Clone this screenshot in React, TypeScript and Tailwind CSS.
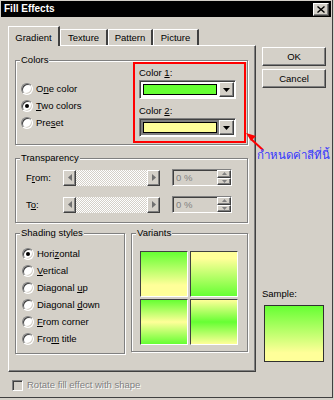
const raised =
  "border border-t-white border-l-white border-r-[#404040] border-b-[#404040] shadow-[inset_-1px_-1px_0_#808080]";
const sunken =
  "border border-t-[#808080] border-l-[#808080] border-r-white border-b-white shadow-[inset_1px_1px_0_#404040]";
const etched = "relative border border-[#808080] shadow-[inset_1px_1px_0_#ffffff,1px_1px_0_#ffffff]";

function Legend({ children }: { children: React.ReactNode }) {
  return (
    <span className="absolute -top-[7px] left-[4px] px-[1px] bg-[#d4d0c8] leading-[12px]">{children}</span>
  );
}

function Radio({ checked }: { checked?: boolean }) {
  return (
    <span className="w-[12px] h-[12px] rounded-full bg-white border border-t-[#808080] border-l-[#808080] border-r-white border-b-white shadow-[inset_1px_1px_0_#404040,inset_-1px_-1px_0_#d4d0c8] flex items-center justify-center shrink-0">
      {checked && <span className="w-[4px] h-[4px] rounded-full bg-black" />}
    </span>
  );
}

function RadioRow({ checked, children }: { checked?: boolean; children: React.ReactNode }) {
  return (
    <div className="flex items-center gap-[3px] h-[17px]">
      <Radio checked={checked} />
      <span>{children}</span>
    </div>
  );
}

function Combo({ color, focus }: { color: string; focus?: boolean }) {
  return (
    <div className={`w-[97px] h-[19px] flex bg-white p-[1px] ${sunken}`}>
      <div className={`flex-1 p-[2px] ${focus ? "bg-[#808080]" : "bg-white"}`}>
        <div className={`h-full border border-black ${color}`} />
      </div>
      <div className={`w-[15px] bg-[#d4d0c8] flex items-center justify-center ${raised}`}>
        <svg width="7" height="4" viewBox="0 0 7 4">
          <path d="M0 0h7L3.5 4z" fill="#000" />
        </svg>
      </div>
    </div>
  );
}

function ArrowBtn({ dir }: { dir: "left" | "right" }) {
  return (
    <div className={`w-[13px] h-full bg-[#d4d0c8] flex items-center justify-center ${raised}`}>
      <svg width="4" height="7" viewBox="0 0 4 7">
        <path d={dir === "left" ? "M4 0v7L0 3.5z" : "M0 0v7l4-3.5z"} fill="#707070" />
      </svg>
    </div>
  );
}

function SliderRow({ label }: { label: React.ReactNode }) {
  return (
    <div className="flex items-center h-[17px]">
      <span className="w-[37px]">{label}</span>
      <div className="flex w-[97px] h-[16px]">
        <ArrowBtn dir="left" />
        <div className="flex-1 bg-[repeating-conic-gradient(#ffffff_0%_25%,#d4d0c8_0%_50%)] bg-size-[2px_2px]" />
        <ArrowBtn dir="right" />
      </div>
      <div className={`ml-[12px] w-[60px] h-[17px] flex ${sunken}`}>
        <span className="flex-1 pl-[3px] text-[#808080] leading-[15px]">0 %</span>
        <div className="w-[14px] flex flex-col">
          <div className={`flex-1 flex items-center justify-center ${raised}`}>
            <svg width="5" height="3" viewBox="0 0 5 3">
              <path d="M0 3h5L2.5 0z" fill="#808080" />
            </svg>
          </div>
          <div className={`flex-1 flex items-center justify-center ${raised}`}>
            <svg width="5" height="3" viewBox="0 0 5 3">
              <path d="M0 0h5L2.5 3z" fill="#808080" />
            </svg>
          </div>
        </div>
      </div>
    </div>
  );
}

function Tile({ bg }: { bg: string }) {
  return (
    <div className="border border-t-[#404040] border-l-[#404040] border-r-white border-b-white">
      <div className={`w-[46px] h-[44px] ${bg}`} />
    </div>
  );
}

export default function App() {
  return (
    <div className="w-[334px] h-[400px] bg-[#d4d0c8] relative overflow-hidden font-['Liberation_Sans',Arial,sans-serif] text-[9.5px] text-black leading-[12px]">
      <div className="w-[333px] h-[398px] border-r border-b border-[#404040] p-[1px] flex flex-col">
        {/* title bar */}
        <div className="h-[16px] bg-black flex items-center justify-between pl-[3px] pr-[2px]">
          <span className="text-white font-bold text-[10px]">Fill Effects</span>
          <div className={`w-[16px] h-[13px] bg-[#d4d0c8] flex items-center justify-center ${raised}`}>
            <svg width="8" height="7" viewBox="0 0 8 7">
              <path d="M0.5 0.5l7 6M7.5 0.5l-7 6" stroke="#000" strokeWidth="1.4" />
            </svg>
          </div>
        </div>

        <div className="flex pl-[7px] pt-[9px]">
          {/* left: tabs */}
          <div className="w-[248px]">
            <div className="flex items-end h-[19px]">
              <div className="relative z-10 w-[52px] h-[20px] -mb-[1px] bg-[#d4d0c8] border-l border-t border-white border-r-2 border-r-[#404040] flex items-start justify-center pt-[5px]">
                Gradient
              </div>
              {["Texture", "Pattern", "Picture"].map((t, i) => (
                <div
                  key={t}
                  className={`h-[16px] border-t border-l border-white border-r-2 border-r-[#404040] flex items-start justify-center pt-[2px] ${
                    i === 0 ? "w-[48px]" : i === 1 ? "w-[45px]" : "w-[46px]"
                  }`}
                >
                  {t}
                </div>
              ))}
            </div>

            <div className="h-[327px] border border-t-white border-l-white border-r-[#404040] border-b-[#404040] shadow-[inset_-1px_-1px_0_#808080] pl-[6px] pt-[14px]">
              {/* Colors */}
              <div className={`w-[233px] h-[85px] flex ${etched}`}>
                <Legend>Colors</Legend>
                <div className="pl-[5px] pt-[19px]">
                  <RadioRow>
                    O<u>n</u>e color
                  </RadioRow>
                  <RadioRow checked>
                    <u>T</u>wo colors
                  </RadioRow>
                  <RadioRow>
                    Pre<u>s</u>et
                  </RadioRow>
                </div>
                <div className="ml-auto mr-[1px] mt-[1px] w-[113px] h-[81px] border-2 border-[#ff0000] pl-[4px] pt-[3px]">
                  <div className="h-[13px]">
                    Color <u>1</u>:
                  </div>
                  <Combo color="bg-[#66ff33]" />
                  <div className="h-[13px] mt-[6px]">
                    Color <u>2</u>:
                  </div>
                  <Combo color="bg-[#ffff99]" focus />
                </div>
              </div>

              {/* Transparency */}
              <div className={`w-[233px] h-[65px] mt-[13px] pl-[10px] pt-[10px] flex flex-col gap-[10px] ${etched}`}>
                <Legend>Transparency</Legend>
                <SliderRow
                  label={
                    <>
                      F<u>r</u>om:
                    </>
                  }
                />
                <SliderRow
                  label={
                    <>
                      T<u>o</u>:
                    </>
                  }
                />
              </div>

              <div className="flex gap-[6px] mt-[10px]">
                {/* Shading styles */}
                <div className={`w-[110px] h-[121px] pl-[6px] pt-[11px] ${etched}`}>
                  <Legend>Shading styles</Legend>
                  <RadioRow checked>
                    Hori<u>z</u>ontal
                  </RadioRow>
                  <RadioRow>
                    <u>V</u>ertical
                  </RadioRow>
                  <RadioRow>
                    Diagonal <u>u</u>p
                  </RadioRow>
                  <RadioRow>
                    Diagonal <u>d</u>own
                  </RadioRow>
                  <RadioRow>
                    <u>F</u>rom corner
                  </RadioRow>
                  <RadioRow>
                    Fro<u>m</u> title
                  </RadioRow>
                </div>

                {/* Variants */}
                <div className={`w-[117px] h-[119px] pl-[8px] pt-[17px] ${etched}`}>
                  <Legend>Variants</Legend>
                  <div className="grid grid-cols-[48px_48px] gap-[2px] w-fit">
                    <Tile bg="bg-[linear-gradient(to_bottom,#66ff33,#ffff99_75%)]" />
                    <Tile bg="bg-[linear-gradient(to_bottom,#ffff99_15%,#66ff33)]" />
                    <Tile bg="bg-[linear-gradient(to_bottom,#66ff33,#ffff99_50%,#66ff33)]" />
                    <Tile bg="bg-[linear-gradient(to_bottom,#ffff99,#66ff33_50%,#ffff99)]" />
                  </div>
                </div>
              </div>
            </div>
          </div>

          {/* right column */}
          <div className="ml-[6px] w-[64px] pt-[21px]">
            <div className={`h-[19px] flex items-center justify-center ${raised}`}>OK</div>
            <div className={`h-[19px] mt-[3px] flex items-center justify-center ${raised}`}>Cancel</div>
            <div className="mt-[200px] h-[11px]">Sample:</div>
            <div className="mt-[6px] ml-[2px] w-[60px] h-[57px] border border-[#303030] bg-[linear-gradient(to_bottom,#66ff33,#ffff99_85%)]" />
          </div>
        </div>

        {/* checkbox */}
        <div className="flex items-center gap-[4px] pl-[11px] mt-[7px] h-[12px]">
          <span className={`w-[11px] h-[11px] bg-[#d4d0c8] ${sunken}`} />
          <span className="text-[#808080] [text-shadow:1px_1px_0_#ffffff]">Rotate fill effect with shape</span>
        </div>
      </div>

      {/* annotation */}
      <svg className="absolute left-[244px] top-[130px]" width="22" height="22" viewBox="0 0 22 22">
        <path d="M19 20L7 9" stroke="#ff0000" strokeWidth="2" />
        <path d="M2 3l10 3-5 5z" fill="#ff0000" />
      </svg>
      <span className="absolute left-[257px] top-[147px] whitespace-nowrap text-[11.5px] leading-[16px] text-[#3535ff] font-['Tahoma','DejaVu_Sans',sans-serif]">
        กำหนดค่าสีที่นี้
      </span>
    </div>
  );
}
